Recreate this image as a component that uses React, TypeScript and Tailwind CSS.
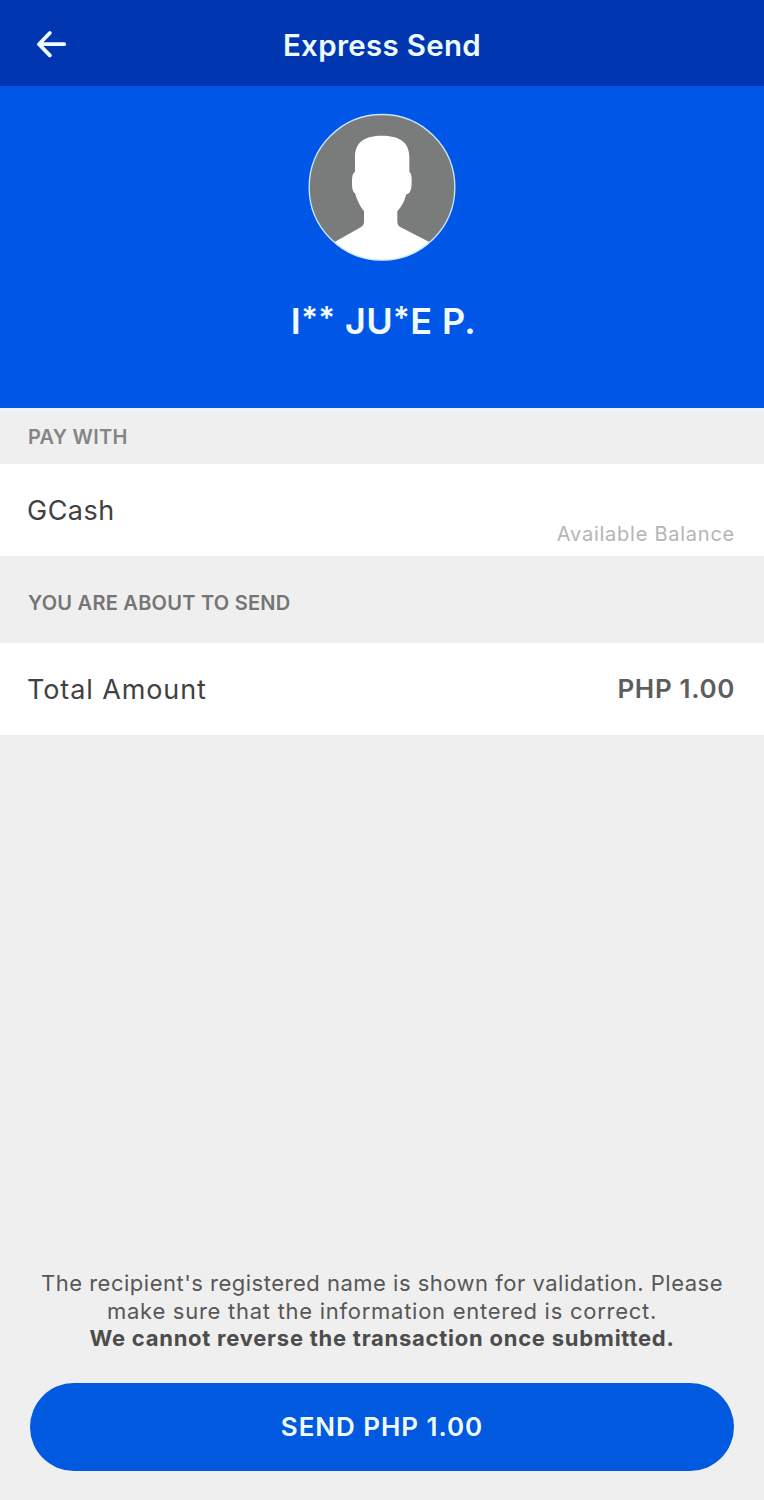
const details = {
  name: "I** JU*E P.",
  wallet: "GCash",
  amount: "PHP 1.00",
};

function BackArrow() {
  return (
    <svg
      viewBox="0 0 32 28"
      className="h-7 w-8"
      fill="none"
      stroke="currentColor"
      strokeWidth="3.8"
      strokeLinecap="round"
      strokeLinejoin="round"
    >
      <path d="M14.8 3 4 14.2 14.8 25.4M4.5 14.2H29.2" />
    </svg>
  );
}

function Avatar() {
  return (
    <svg viewBox="0 0 444 444" className="size-[148px]">
      <defs>
        <clipPath id="avatar-clip">
          <circle cx="222" cy="223" r="219" />
        </clipPath>
      </defs>
      <circle cx="222" cy="223" r="218" fill="#7a7c7b" />
      <path
        clipPath="url(#avatar-clip)"
        fill="#fff"
        d="M222 68C172 68 141 86 141 132V177C134 181 132 190 132 207C132 228 134 236 141 241C147 262 156 281 168 295V325C168 334 165 339 158 343L80 387V444H364V387L278 343C271 339 268 334 268 325V295C281 280 290 264 295 244C304 243 311 234 311 207C311 190 310 181 304 177V132C304 86 272 68 222 68Z"
      />
      <circle cx="222" cy="223" r="218.5" fill="none" stroke="#c9e9fb" strokeWidth="4" />
    </svg>
  );
}

// masked characters sit high on the line, like superscripts
function MaskedName({ value }: { value: string }) {
  return (
    <span>
      {value.split("").map((char, i) =>
        char === "*" ? (
          <span key={i} className="relative -top-[5px] text-[31px]">
            *
          </span>
        ) : (
          char
        ),
      )}
    </span>
  );
}

export default function App() {
  return (
    <div className="flex h-[1500px] w-[764px] flex-col bg-[#efefef] font-['Inter',sans-serif]">
      <header className="grid h-[86px] grid-cols-[1fr_auto_1fr] items-center bg-[#0037b1] text-[#f0fbff]">
        <button className="justify-self-start pt-[2px] pl-[35px]" aria-label="Back">
          <BackArrow />
        </button>
        <h1 className="pt-[3px] text-[29.5px] leading-9 font-semibold tracking-[0.3px]">
          Express Send
        </h1>
      </header>

      <section className="flex h-[322px] flex-col items-center bg-[#0057e7] pt-[27px]">
        <Avatar />
        <p className="mt-[35px] pl-[3px] text-[36px] leading-[50px] font-semibold tracking-[0.4px] whitespace-nowrap text-[#f0fbff]">
          <MaskedName value={details.name} />
        </p>
      </section>

      <h2 className="flex h-14 items-center border-t-[5px] border-[#eef1fa] px-7 pb-1 text-[20px] font-semibold tracking-[0.25px] text-[#858585]">
        <span>PAY WITH</span>
      </h2>
      <div className="flex h-[92px] justify-between bg-white pr-[29px] pl-[27px]">
        <span className="self-center pt-px text-[27px] leading-9 tracking-[0.5px] text-[#414141]">
          {details.wallet}
        </span>
        <span className="self-end pb-2 text-[20px] leading-7 tracking-[0.75px] text-[#b5b5b5]">
          Available Balance
        </span>
      </div>

      <h2 className="flex h-[87px] items-center px-7 pt-[6px] text-[20px] font-semibold tracking-[0.25px] text-[#757575]">
        <span>YOU ARE ABOUT TO SEND</span>
      </h2>
      <div className="flex h-[92px] items-center justify-between bg-white pr-[29px] pl-[27px]">
        <span className="pt-[2px] text-[27px] tracking-[0.9px] text-[#414141]">Total Amount</span>
        <span className="pb-[2px] text-[26px] font-semibold tracking-[0.65px] text-[#5e5e5e]">
          {details.amount}
        </span>
      </div>

      <footer className="mt-auto px-[30px] pb-[29px]">
        <p className="text-center text-[22px] leading-[27.6px] whitespace-nowrap text-[#575757]">
          <span className="tracking-[0.5px]">
            The recipient's registered name is shown for validation. Please
          </span>
          <br />
          <span className="tracking-[0.73px]">
            make sure that the information entered is correct.
          </span>
          <br />
          <strong className="font-bold tracking-[0.75px] text-[#4c4c4c]">
            We cannot reverse the transaction once submitted.
          </strong>
        </p>
        <button className="mt-[30px] flex h-[88px] w-full items-center justify-center rounded-full bg-[#0059de] pb-[2px] text-[26px] font-semibold tracking-[0.95px] text-[#f0fbff]">
          <span>SEND {details.amount}</span>
        </button>
      </footer>
    </div>
  );
}
